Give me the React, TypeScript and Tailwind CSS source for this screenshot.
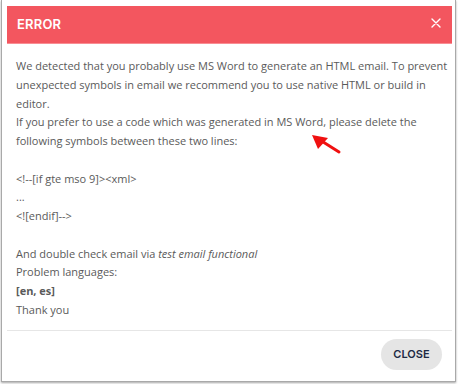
export default function App() {
  return (
    <div className="w-[458px] h-[384px] bg-white">
      {/* screenshot frame */}
      <div className="relative ml-[1px] w-[455px] h-[382px] border-x border-b border-[#a9a9a9] shadow-[0_1px_2px_rgba(0,0,0,0.35)] bg-white pl-[5px] pr-[3px] pt-[6px]">
        {/* Header */}
        <div className="h-[38px] bg-[#f3565f] border-b border-[#f98d93] flex items-center justify-between pl-[10px] pr-[11px]">
          <span className="text-white text-[13px] font-semibold tracking-[0.2px]" style={{ fontFamily: 'Inter, "Noto Sans", sans-serif' }}>
            ERROR
          </span>
          <svg width="10" height="10" viewBox="0 0 10 10" className="mb-[4px]">
            <path d="M1 1L9 9M9 1L1 9" stroke="white" strokeWidth="1.4" strokeLinecap="round" />
          </svg>
        </div>

        {/* Body */}
        <div
          className="pl-[9px] pt-[13px] h-[286px] text-[11px] leading-[18.77px] text-[#5a5a5a] whitespace-nowrap"
          style={{ fontFamily: '"Open Sans", "Noto Sans", sans-serif' }}
        >
          <p>
            We detected that you probably use MS Word to generate an HTML email. To prevent
            <br />
            unexpected symbols in email we recommend you to use native HTML or build in
            <br />
            editor.
          </p>
          <p>
            If you prefer to use a code which was generated in MS Word, please delete the
            <br />
            following symbols between these two lines:
          </p>
          <p>&nbsp;</p>
          <p>{'<!--[if gte mso 9]><xml>'}</p>
          <p>...</p>
          <p>{'<![endif]-->'}</p>
          <p>&nbsp;</p>
          <p>
            And double check email via <i>test email functional</i>
          </p>
          <p>Problem languages:</p>
          <p className="font-bold">[en, es]</p>
          <p>Thank you</p>
        </div>

        {/* Footer */}
        <div className="border-t border-[#e6e6e6] flex justify-end pt-[8px] pr-[10px]">
          <button
            className="h-[31px] w-[61px] rounded-full bg-[#e5e5e5] text-[#1d2a44] text-[11px] font-semibold"
            style={{ fontFamily: 'Inter, "Noto Sans", sans-serif' }}
          >
            CLOSE
          </button>
        </div>

        {/* annotation arrow */}
        <svg className="absolute left-[306px] top-[131px]" width="40" height="28" viewBox="0 0 40 28">
          <path d="M31 21L12 9" stroke="#f01010" strokeWidth="3" strokeLinecap="round" />
          <path d="M4 4L20 7L10 18Z" fill="#f01010" />
        </svg>
      </div>
    </div>
  );
}
